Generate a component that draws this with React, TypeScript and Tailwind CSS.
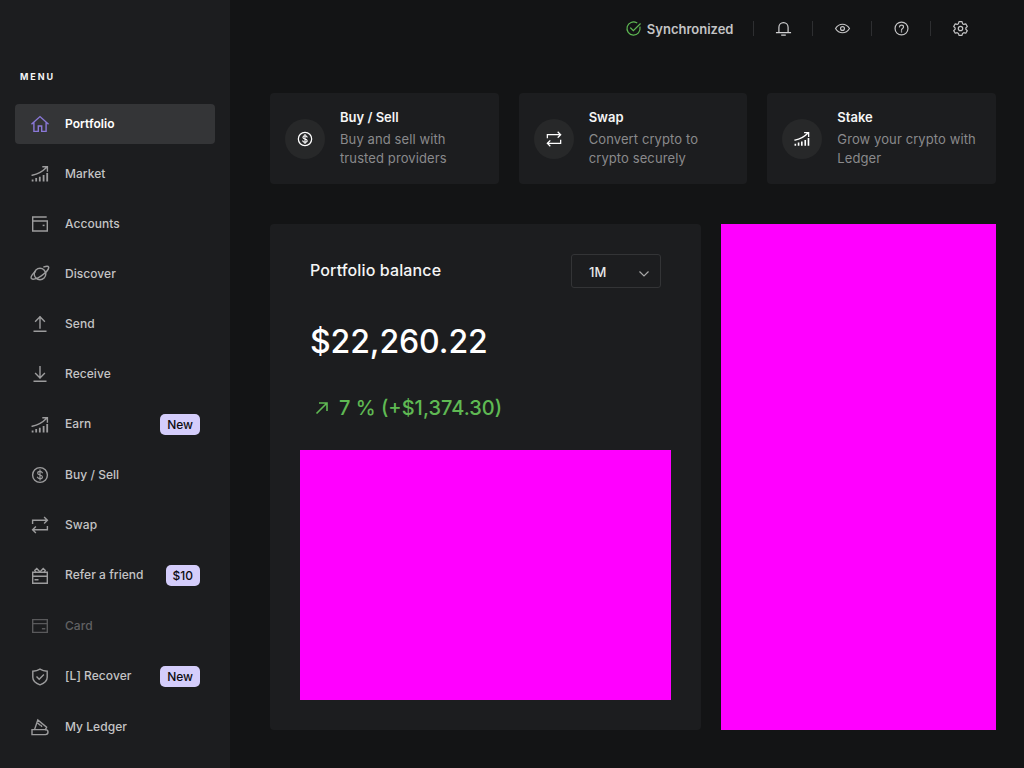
import React from "react";

type P = { className?: string };
const S = ({ className, children }: P & { children: React.ReactNode }) => (
  <svg viewBox="0 0 20 20" fill="none" stroke="currentColor" strokeWidth={1.4} strokeLinecap="square" strokeLinejoin="miter" className={className}>
    {children}
  </svg>
);

const Home = (p: P) => (
  <S {...p}>
    <path d="M2 9.800 10 2.600l8 7.200M3.900 8.400V17.400h4.400v-5.400h3.400v5.400h4.400V8.400" />
  </S>
);
const Chart = (p: P) => (
  <S {...p}>
    <path d="M2.200 11.200c4.600-.8 10-3.200 14.200-7.600M13 2.800h4.400v4.200" />
    <path d="M2.600 15.400v2.200M6.200 14v3.600M9.800 12.800v4.800M13.600 11v6.600M17.200 9v8.600" strokeWidth={1.8} strokeLinecap="butt" />
  </S>
);
const Wallet = (p: P) => (
  <S {...p}>
    <path d="M16 3H2.700v14h14.600V7H2.700" />
    <path d="M13.400 11.400h.4" strokeWidth={1.5} />
  </S>
);
const Planet = (p: P) => (
  <S {...p}>
    <circle cx="10" cy="10" r="5.800" />
    <path d="M5.200 7.800C2.400 10.200.6 13 1.300 14.400c1 1.700 5.500.5 10-2.600 4.600-3.200 7.900-7.100 7.300-8.800-.4-1.100-2.300-1-4.600-.1" />
  </S>
);
const Send = (p: P) => (
  <S {...p}>
    <path d="M10 14V2.800M5.600 7.200 10 2.800l4.400 4.400M4.200 17.200h11.600" />
  </S>
);
const Receive = (p: P) => (
  <S {...p}>
    <path d="M10 2.800V14M5.600 9.600 10 14l4.400-4.400M4.200 17.200h11.600" />
  </S>
);
const Dollar = (p: P) => (
  <S {...p}>
    <circle cx="10" cy="10" r="7.400" />
    <path d="M12.300 7.700c-.4-.9-1.200-1.300-2.300-1.300-1.300 0-2.300.7-2.300 1.800 0 2.600 4.700 1 4.700 3.700 0 1.100-1 1.800-2.400 1.800-1.200 0-2.100-.5-2.500-1.400M10 5v10" strokeWidth={1.2} />
  </S>
);
const SwapI = (p: P) => (
  <S {...p}>
    <path d="M2.600 8.400V5.200h14.600M14.600 2.400l2.800 2.800-2.800 2.800M17.400 11.600v3.200H2.800M5.400 12l-2.800 2.800 2.800 2.800" />
  </S>
);
const Gift = (p: P) => (
  <S {...p}>
    <path d="M2.700 6.200h14.600v11H2.700zM2.700 10.200h14.600M5.200 13.800h2.600" />
    <path d="M10 6 6.800 2.600 4.800 4.400l1 1.800M10 6l3.200-3.400 2 1.800-1 1.800" />
  </S>
);
const CardI = (p: P) => (
  <S {...p}>
    <path d="M2.700 3.600h14.600v12.800H2.700zM2.700 7.600h14.600M12.600 12.800h2" />
  </S>
);
const Shield = (p: P) => (
  <S {...p}>
    <path d="M10 2.200c2.200 1.400 4.800 2 7.200 2v6c0 3.600-3.200 6.200-7.200 7.600-4-1.400-7.200-4-7.200-7.600v-6c2.400 0 5-.6 7.200-2Z" />
    <path d="m7 10 2.200 2.200L13.400 8" />
  </S>
);
const LedgerI = (p: P) => (
  <S {...p}>
    <path d="M2 12.600h13.400c1.500 0 2.600 1.100 2.600 2.500s-1.100 2.500-2.600 2.500H2Z" />
    <path d="M4.600 12.400 7.800 3l8.800 7.200-1.200 2.400M8.200 6.400l1.400 1.400M11 8.600l.6.6" />
  </S>
);
const Check = (p: P) => (
  <S {...p}>
    <path d="M17.600 8.600A7.700 7.700 0 1 1 13.800 3.300" />
    <path d="m6.600 9.400 3.200 3.200 8-8" />
  </S>
);
const Bell = (p: P) => (
  <S {...p}>
    <path d="M4.600 14.600V8.400a5.400 5.400 0 0 1 10.800 0v6.200M1.800 14.800h16.400M8 17.800h4" />
  </S>
);
const Eye = (p: P) => (
  <S {...p}>
    <path d="M1.800 10c1.800-3 4.800-5 8.200-5s6.400 2 8.200 5c-1.800 3-4.800 5-8.200 5s-6.400-2-8.200-5Z" />
    <circle cx="10" cy="10" r="2.300" />
  </S>
);
const Help = (p: P) => (
  <S {...p}>
    <circle cx="10" cy="10" r="7.600" />
    <path d="M7.600 8c.2-1.300 1.100-2 2.400-2 1.400 0 2.400.9 2.400 2.100 0 1.900-2.400 1.900-2.400 3.700M10 14h.05" />
  </S>
);
const Gear = (p: P) => (
  <S {...p}>
    <path d="M8.200 2h3.600l.6 2.300 1.500.9 2.300-.7 1.800 3.100-1.700 1.600v1.700l1.700 1.600-1.800 3.100-2.300-.7-1.500.9-.6 2.300H8.200l-.6-2.300-1.500-.9-2.300.7-1.800-3.100 1.700-1.600V9.200L2 7.600l1.800-3.100 2.300.7 1.500-.9Z" strokeLinejoin="round" />
    <circle cx="10" cy="10" r="2.600" />
  </S>
);

const nav: { label: string; Icon: (p: P) => React.ReactNode; badge?: string; active?: boolean; dim?: boolean }[] = [
  { label: "Portfolio", Icon: Home, active: true },
  { label: "Market", Icon: Chart },
  { label: "Accounts", Icon: Wallet },
  { label: "Discover", Icon: Planet },
  { label: "Send", Icon: Send },
  { label: "Receive", Icon: Receive },
  { label: "Earn", Icon: Chart, badge: "New" },
  { label: "Buy / Sell", Icon: Dollar },
  { label: "Swap", Icon: SwapI },
  { label: "Refer a friend", Icon: Gift, badge: "$10" },
  { label: "Card", Icon: CardI, dim: true },
  { label: "[L] Recover", Icon: Shield, badge: "New" },
  { label: "My Ledger", Icon: LedgerI },
];

const actions = [
  { title: "Buy / Sell", lines: ["Buy and sell with", "trusted providers"], Icon: Dollar },
  { title: "Swap", lines: ["Convert crypto to", "crypto securely"], Icon: SwapI },
  { title: "Stake", lines: ["Grow your crypto with", "Ledger"], Icon: Chart },
];

const Divider = () => <div className="w-px h-[15px] bg-[#2e2f31]" />;

export default function App() {
  return (
    <div className="flex h-[768px] w-[1024px] overflow-hidden bg-[#131415] font-['Inter',sans-serif] text-white">
      <aside className="w-[230px] shrink-0 bg-[#1c1d1f] pl-[15px] pr-[15px] pt-[71px]">
        <div className="pl-[5px] text-[9px] leading-[12px] font-bold tracking-[1.9px] text-[#f4f4f4] h-[33px]">MENU</div>
        <nav className="flex flex-col gap-[10px]">
          {nav.map(({ label, Icon, badge, active, dim }) => (
            <div
              key={label}
              className={`flex items-center pl-[15px] pr-[15px] rounded-[4px] ${badge ? "h-[41px]" : "h-10"} ${active ? "bg-[#343537]" : ""}`}
            >
              <Icon className={`w-5 h-5 shrink-0 ${active ? "text-[#8a78d8]" : dim ? "text-[#59595b]" : "text-[#9c9c9d]"}`} />
              <span
                className={`ml-[15px] text-[12px] leading-4 tracking-[0.05px] flex-1 whitespace-nowrap ${badge ? "-mt-[2px]" : ""} ${active ? "text-white font-semibold" : dim ? "text-[#616163] font-medium" : "text-[#c4c4c5] font-medium"}`}
              >
                {label}
              </span>
              {badge && (
                <span className="h-[21px] px-[7px] flex items-center rounded-[5px] bg-[#d4cdfb] text-[#0c0c0f] text-[12px] font-medium">
                  {badge}
                </span>
              )}
            </div>
          ))}
        </nav>
      </aside>

      <main className="flex-1 flex flex-col pl-10 pr-7">
        <header className="h-[93px] shrink-0 flex items-start justify-end pr-[27px] pt-[20.5px]">
          <div className="flex items-center h-4 text-[#c4c4c5]">
            <Check className="w-[17px] h-[17px] text-[#5fb953] mr-[5px]" />
            <span className="text-[13px] leading-4 font-semibold whitespace-nowrap">Synchronized</span>
            <div className="ml-[19.5px]"><Divider /></div>
            <Bell className="w-[17px] h-[17px] ml-[21px] mr-[20px] text-[#d0d0d1]" />
            <Divider />
            <Eye className="w-[17px] h-[17px] ml-[21px] mr-[20px]" />
            <Divider />
            <Help className="w-[17px] h-[17px] ml-[21px] mr-[20px]" />
            <Divider />
            <Gear className="w-[17px] h-[17px] ml-[21px]" />
          </div>
        </header>

        <section className="grid grid-cols-3 gap-5 h-[91px] shrink-0">
          {actions.map(({ title, lines, Icon }) => (
            <div key={title} className="flex items-center bg-[#1c1d1f] rounded-[4px] pl-[15px]">
              <div className="w-10 h-10 rounded-full bg-[#272829] flex items-center justify-center shrink-0">
                <Icon className="w-[18px] h-[18px] text-white" />
              </div>
              <div className="ml-[15px] mb-[2px]">
                <div className="text-[13px] leading-[19px] font-semibold text-[#f5f5f5] mb-[3px]">{title}</div>
                {lines.map((l) => (
                  <div key={l} className="text-[13px] leading-[19px] tracking-[0.1px] text-[#8a8a8c] whitespace-nowrap">{l}</div>
                ))}
              </div>
            </div>
          ))}
        </section>

        <section className="flex gap-5 mt-10 h-[506px] shrink-0">
          <div className="w-[431px] bg-[#1c1d1f] rounded-[4px] pt-[30px] px-[30px] flex flex-col">
            <div className="flex items-start justify-between pl-[10px] pr-[10px]">
              <span className="text-[16px] leading-[34px] tracking-[0.12px] font-medium -mt-px text-[#f5f5f5]">Portfolio balance</span>
              <div className="w-[90px] h-[34px] border border-[#333436] rounded-[3px] flex items-center justify-between pl-[17px] pr-[10px]">
                <span className="text-[13px] font-medium text-[#e8e8e8] mt-[3px]">1M</span>
                <svg viewBox="0 0 12 12" className="w-3 h-3 text-[#a8a8a8] mt-[3px]" fill="none" stroke="currentColor" strokeWidth="1.200">
                  <path d="M1.500 4.500 6 9l4.500-4.500" />
                </svg>
              </div>
            </div>
            <div className="pl-[10px] mt-[32px] text-[32px] leading-[44px] tracking-[-0.1px] font-[450] text-white">$22,260.22</div>
            <div className="pl-[14px] mt-[30px] flex items-center text-[#5fb953]">
              <svg viewBox="0 0 16 16" className="w-4 h-4" fill="none" stroke="currentColor" strokeWidth="1.600">
                <path d="M2.500 13.500 13 3M5 3h8v8" />
              </svg>
              <span className="ml-[9px] text-[20px] leading-7 font-[450] whitespace-nowrap">7 % (+$1,374.30)</span>
            </div>
            <div className="mt-[28px] h-[250px] w-[371px] bg-[#ff00ff]" />
          </div>
          <div className="flex-1 bg-[#ff00ff]" />
        </section>
      </main>
    </div>
  );
}
